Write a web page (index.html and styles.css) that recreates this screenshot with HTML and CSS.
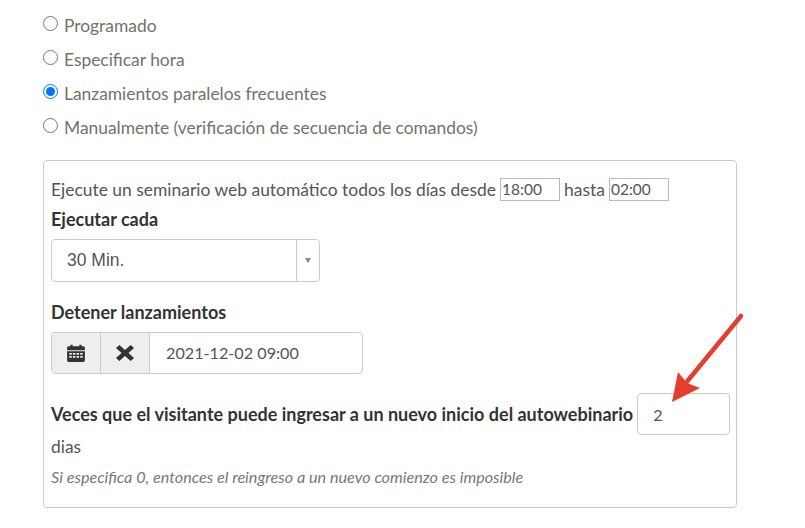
FILE: index.html
```html
<!DOCTYPE html>
<html lang="es">
<head>
  <meta charset="UTF-8" />
  <meta name="viewport" content="width=device-width, initial-scale=1.0" />
  <title>Autowebinario</title>
  <link rel="stylesheet" href="styles.css">
</head>
<body>
  <div class="page">
    <form>
      <div class="radio-list">
        <label class="radio-row"><input type="radio" name="mode" /> <span>Programado</span></label>
        <label class="radio-row"><input type="radio" name="mode" /> <span>Especificar hora</span></label>
        <label class="radio-row"><input type="radio" name="mode" checked /> <span>Lanzamientos paralelos frecuentes</span></label>
        <label class="radio-row"><input type="radio" name="mode" /> <span>Manualmente (verificación de secuencia de comandos)</span></label>
      </div>

      <div class="panel">
        <div class="time-row">
          Ejecute un seminario web automático todos los días desde
          <input type="text" class="time-input" value="18:00" />
          hasta
          <input type="text" class="time-input" value="02:00" />
        </div>

        <div class="field-label">Ejecutar cada</div>
        <div class="select-box">
          <span class="select-value">30 Min.</span>
          <span class="select-arrow"><i class="caret"></i></span>
        </div>

        <div class="field-label stop-label">Detener lanzamientos</div>
        <div class="date-group">
          <span class="addon">
            <svg width="20" height="20" viewBox="0 0 18 18" aria-hidden="true">
              <path fill="#333" d="M1 4.500c0-.8.6-1.500 1.400-1.500H4V1.500h2V3h6V1.500h2V3h1.600c.8 0 1.400.7 1.400 1.500V6.500H1z" />
              <path fill="#333" fill-rule="evenodd" d="M1 7.500h16v8c0 .8-.6 1.500-1.400 1.500H2.400C1.600 17 1 16.300 1 15.500zM3 9v1.500h2.200V9zm3.200 0v1.500h2.200V9zm3.300 0v1.500h2.200V9zm3.300 0v1.500H15V9zM3 11.700v1.500h2.200v-1.500zm3.200 0v1.500h2.200v-1.500zm3.300 0v1.500h2.200v-1.500zm3.300 0v1.500H15v-1.500z" />
            </svg>
          </span>
          <span class="addon">
            <svg width="18" height="16" viewBox="1 1 14 14" preserveAspectRatio="none" aria-hidden="true">
              <path fill="#333" d="M3.600 1 8 5.300 12.400 1 15 3.600 10.700 8 15 12.400 12.400 15 8 10.700 3.600 15 1 12.400 5.300 8 1 3.600z" />
            </svg>
          </span>
          <span class="date-value">2021-12-02 09:00</span>
        </div>

        <div class="reentry-row">
          <label class="field-label reentry-label">Veces que el visitante puede ingresar a un nuevo inicio del autowebinario</label>
          <input type="text" class="days-input" value="2" />
        </div>
        <div class="days-unit">dias</div>
        <div class="hint">Si especifica 0, entonces el reingreso a un nuevo comienzo es imposible</div>
      </div>
    </form>

    <svg class="arrow" width="90" height="100" viewBox="0 0 90 100" aria-hidden="true">
      <path d="M80 6 L24 74" stroke="#e53d30" stroke-width="4.500" stroke-linecap="round" fill="none" />
      <path fill="#e53d30" d="M11 92 L17 62 L26 73 L39 78z" />
    </svg>
  </div>
</body>
</html>
```

FILE: styles.css
```css
* {
  box-sizing: border-box;
}
body {
  margin: 0;
  background: white;
  font-family: "Lato", "Open Sans", sans-serif;
  font-size: 17.400px;
  color: #555;
}
.page {
  position: relative;
  width: 805px;
  height: 528px;
  overflow: hidden;
  padding: 8px 68px 0 43px;
}
.radio-list {
  display: flex;
  flex-direction: column;
}
.radio-row {
  display: flex;
  align-items: center;
  gap: 6px;
  height: 34px;
  color: #6f7468;
}
.radio-row input {
  margin: 0 0 3px 0;
  width: 15px;
  height: 15px;
}
.panel {
  margin-top: 16px;
  height: 348px;
  border: 1px solid #ccc;
  border-radius: 4px;
  padding: 16px 6px 0 7px;
}
.time-row {
  height: 24px;
  display: flex;
  align-items: center;
  gap: 4px;
  font-size: 17.450px;
  white-space: nowrap;
}
.time-input {
  width: 60px;
  height: 23px;
  border: 1px solid #bbb;
  padding: 0 1px;
  font: inherit;
  font-size: 15.500px;
  color: #555;
}
.field-label {
  font-weight: 700;
  font-size: 18px;
  color: #333;
}
.time-row + .field-label {
  margin-top: 7px;
  line-height: 22px;
}
.select-box {
  display: flex;
  width: 269px;
  height: 43px;
  margin-top: 9px;
  border: 1px solid #ccc;
  border-radius: 4px;
}
.select-value {
  flex: 1;
  padding-left: 15px;
  line-height: 41px;
  font-family: "Liberation Sans", sans-serif;
  font-size: 17.500px;
}
.select-arrow {
  width: 23px;
  margin: 0;
  border-left: 1px solid #ccc;
  display: flex;
  align-items: center;
  justify-content: center;
}
.caret {
  width: 0;
  height: 0;
  border-left: 3px solid transparent;
  border-right: 3px solid transparent;
  border-top: 5px solid #888;
}
.stop-label {
  margin-top: 19px;
  line-height: 22px;
}
.date-group {
  display: flex;
  width: 312px;
  height: 42px;
  margin-top: 9px;
  border: 1px solid #ccc;
  border-radius: 4px;
  overflow: hidden;
}
.addon {
  width: 49px;
  background: #eee;
  border-right: 1px solid #ccc;
  display: flex;
  align-items: center;
  justify-content: center;
}
.date-value {
  flex: 1;
  padding-left: 16px;
  line-height: 40px;
  font-size: 16.200px;
}
.reentry-row {
  display: flex;
  align-items: center;
  gap: 4px;
  margin-top: 19px;
}
.reentry-label {
  white-space: nowrap;
}
.days-input {
  flex: 1;
  min-width: 0;
  height: 42px;
  border: 1px solid #ccc;
  border-radius: 4px;
  padding: 0 15px;
  font: inherit;
  font-size: 16.200px;
  color: #555;
}
.days-unit {
  margin-top: 1px;
  line-height: 22px;
}
.hint {
  margin-top: 9px;
  font-size: 16.200px;
  font-style: italic;
  color: #777;
  line-height: 20px;
}
.arrow {
  position: absolute;
  left: 661px;
  top: 310px;
}
```
